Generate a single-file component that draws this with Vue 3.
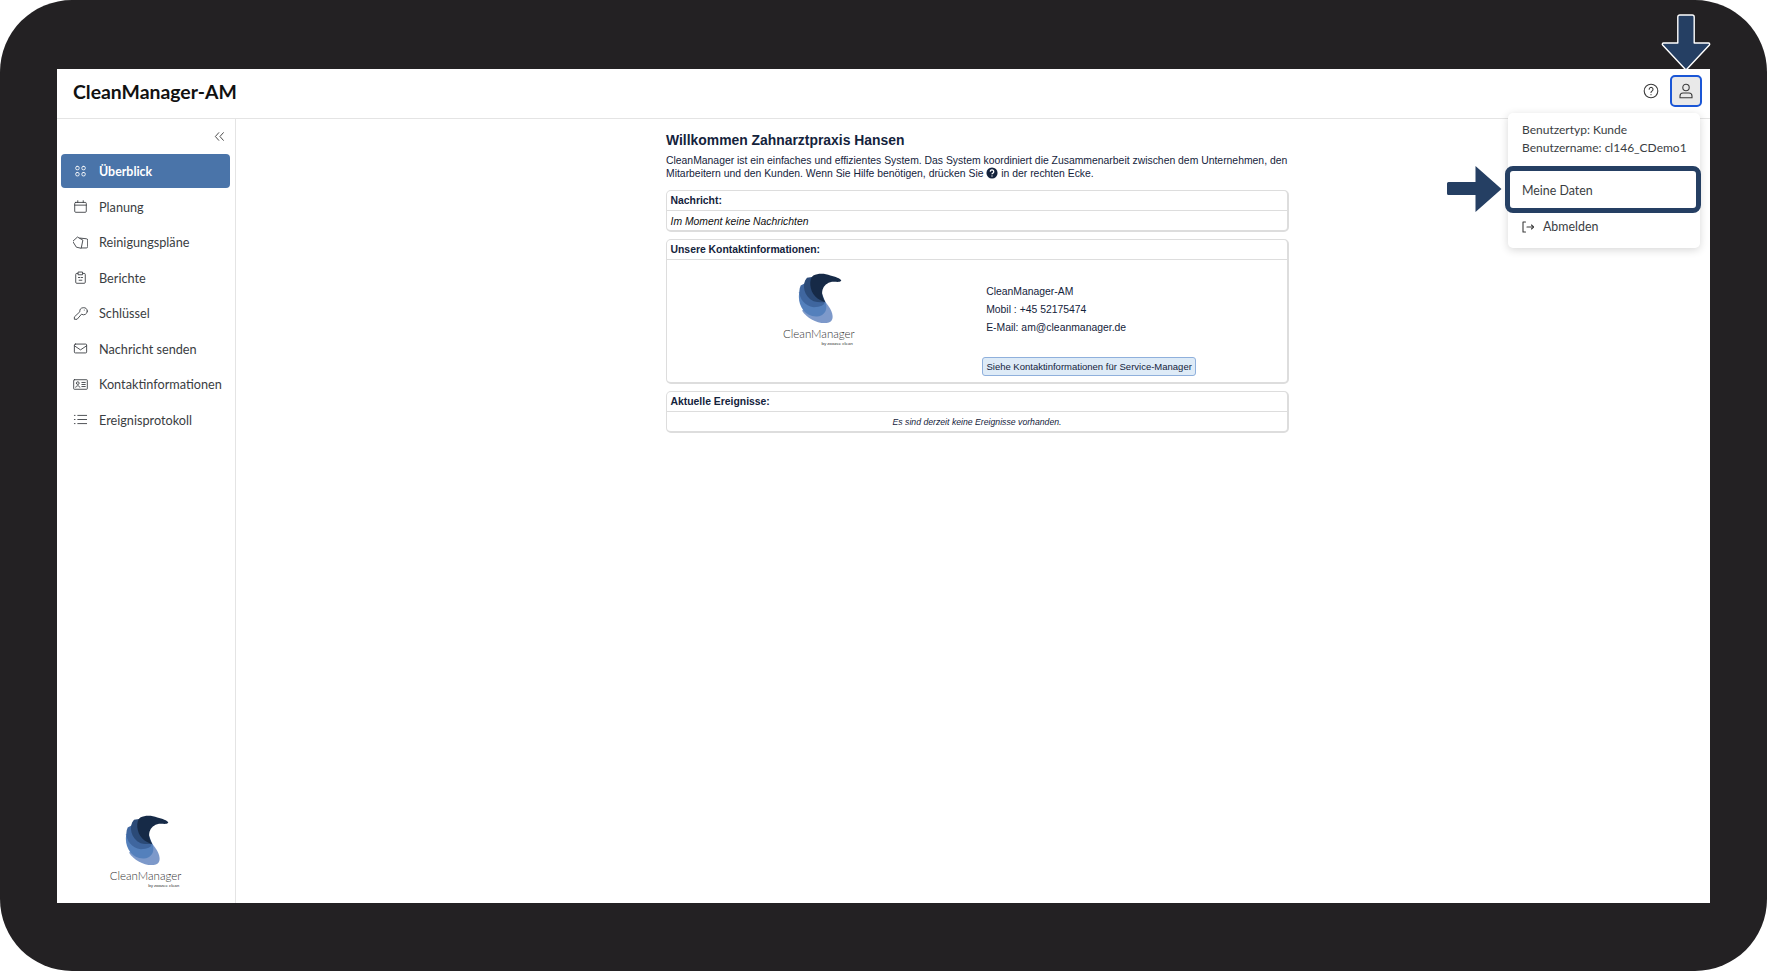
<script setup>
const navItems = [
  { label: 'Überblick', active: true, paths: ['M6 3.500h1a2 2 0 0 1 2 2v1a2 2 0 0 1-2 2H6a2 2 0 0 1-2-2v-1a2 2 0 0 1 2-2z', 'M15 3.500h1a2 2 0 0 1 2 2v1a2 2 0 0 1-2 2h-1a2 2 0 0 1-2-2v-1a2 2 0 0 1 2-2z', 'M6 12.500h1a2 2 0 0 1 2 2v1a2 2 0 0 1-2 2H6a2 2 0 0 1-2-2v-1a2 2 0 0 1 2-2z', 'M15 12.500h1a2 2 0 0 1 2 2v1a2 2 0 0 1-2 2h-1a2 2 0 0 1-2-2v-1a2 2 0 0 1 2-2z'] },
  { label: 'Planung', paths: ['M4 5h14a1.5 1.5 0 0 1 1.5 1.5V18a1.5 1.5 0 0 1-1.5 1.5H4A1.5 1.5 0 0 1 2.500 18V6.500A1.500 1.500 0 0 1 4 5z', 'M2.500 9h17', 'M7 2.500V5', 'M15 2.500V5'] },
  { label: 'Reinigungspläne', paths: ['M10 4.500l9.500 1a2 2 0 0 1 2 2V17a2 2 0 0 1-2 2h-7', 'M0 9l6.500-6 8 4.500-2.500 12-6.500-1.500z'] },
  { label: 'Berichte', paths: ['M7 5H5.500A1.500 1.500 0 0 0 4 6.500V18a1.500 1.500 0 0 0 1.500 1.500h11A1.500 1.500 0 0 0 18 18V6.500A1.500 1.500 0 0 0 16.500 5H15', 'M8 3h6v4H8z', 'M8 11h2', 'M12 11h2', 'M9 15h4'] },
  { label: 'Schlüssel', paths: ['M21 7.500a5.500 5.500 0 0 1-8.500 4.500l-6.500 7.500H2v-3.500l8-7.500A5.500 5.500 0 0 1 21 7.500z', 'M16.500 6h.01'] },
  { label: 'Nachricht senden', paths: ['M3.500 4.500h15A1.500 1.500 0 0 1 20 6v10a1.500 1.500 0 0 1-1.500 1.500h-15A1.500 1.500 0 0 1 2 16V6a1.500 1.500 0 0 1 1.500-1.500z', 'M2 7l9 6 9-6'] },
  { label: 'Kontaktinformationen', paths: ['M2 4h18a1 1 0 0 1 1 1v12a1 1 0 0 1-1 1H2a1 1 0 0 1-1-1V5a1 1 0 0 1 1-1z', 'M5 9a2 2 0 1 1 4 0 2 2 0 1 1-4 0', 'M4 15c.500-3 5.500-3 6 0', 'M13 8h5', 'M13 11h5', 'M13 14h5'] },
  { label: 'Ereignisprotokoll', paths: ['M7 5h13', 'M7 11h13', 'M7 17h13', 'M2 5h1', 'M2 11h1', 'M2 17h1'] }
]

const logoLayers = [
  { fill: '#7d99ca', d: 'M10 110C25 135 60 152 88 147C108 143 108 115 78 82Z' },
  { fill: '#5480bc', d: 'M2 55C-5 90 15 130 55 128C80 125 88 105 80 84L30 30Z' },
  { fill: '#3f669f', d: 'M6 35C-6 60 10 95 45 100C65 100 78 95 78 84L35 20Z' },
  { fill: '#2b4a77', d: 'M25 12C8 30 15 70 45 82C60 86 72 84 80 85C70 60 60 30 50 8Z' },
  { fill: '#162a47', d: 'M44 5C30 15 32 50 50 68C58 76 70 83 80 85C62 60 70 30 100 24C110 22 122 28 128 20C125 14 110 8 95 5C78 -2 58 -2 44 5Z' }
]
</script>

<template>
  <div class="page">
    <div class="frame">
      <header class="topbar">
        <h1 class="brand">CleanManager-AM</h1>
        <div class="top-actions">
          <svg class="help-icon" viewBox="0 0 16 16" fill="none" stroke="#3b3b3b" stroke-width="1.100" stroke-linecap="round">
            <circle cx="8" cy="8" r="6.800" />
            <path d="M6.200 6.300a1.900 1.900 0 1 1 2.900 1.600c-.7.400-1.100.8-1.100 1.600" />
            <path d="M8 11.600v.1" />
          </svg>
          <button class="user-btn">
            <svg viewBox="0 0 16 16" fill="none" stroke="#3b3b3b" stroke-width="1.100">
              <circle cx="8" cy="4.500" r="3.200" />
              <path d="M5 10h6a3 3 0 0 1 3 3v1.800H2V13a3 3 0 0 1 3-3z" />
            </svg>
          </button>
        </div>
      </header>

      <div class="body">
        <aside class="sidebar">
          <div class="collapse">
            <svg viewBox="0 0 12 12" fill="none" stroke="#3b3b3b" stroke-width="1">
              <path d="M5.500 1.500L1.500 6l4 4.500" />
              <path d="M10.500 1.500L6.500 6l4 4.500" />
            </svg>
          </div>
          <nav class="nav">
            <a v-for="item in navItems" :key="item.label" class="nav-item" :class="{ active: item.active }">
              <svg class="nav-icon" viewBox="0 0 22 22" fill="none" stroke="currentColor" stroke-width="1.300" stroke-linejoin="round" stroke-linecap="round">
                <path v-for="d in item.paths" :key="d" :d="d" />
              </svg>
              <span>{{ item.label }}</span>
            </a>
          </nav>
          <div class="side-logo">
            <svg class="wave" viewBox="-2 -2 132 152">
              <path v-for="l in logoLayers" :key="l.fill" :fill="l.fill" :d="l.d" />
            </svg>
            <div class="logo-name">CleanManager</div>
            <div class="logo-by">by zoozee clean</div>
          </div>
        </aside>

        <main class="main">
          <div class="content">
            <h2 class="welcome">Willkommen Zahnarztpraxis Hansen</h2>
            <p class="intro">
              CleanManager ist ein einfaches und effizientes System. Das System koordiniert die Zusammenarbeit zwischen dem Unternehmen, den Mitarbeitern und den Kunden. Wenn Sie Hilfe benötigen, drücken Sie
              <svg class="inline-help" viewBox="0 0 14 14">
                <circle cx="7" cy="7" r="6.500" fill="#14233c" />
                <path d="M5 5.400a2 2 0 1 1 3.100 1.700c-.7.400-1.100.8-1.100 1.500" fill="none" stroke="#fff" stroke-width="1.500" />
                <path d="M7 9.800v1.400" fill="none" stroke="#fff" stroke-width="1.500" />
              </svg>
              in der rechten Ecke.
            </p>

            <section class="panel">
              <div class="panel-head">Nachricht:</div>
              <div class="panel-row msg">Im Moment keine Nachrichten</div>
            </section>

            <section class="panel">
              <div class="panel-head">Unsere Kontaktinformationen:</div>
              <div class="contact">
                <div class="contact-logo">
                  <svg class="wave" viewBox="-2 -2 132 152">
                    <path v-for="l in logoLayers" :key="l.fill" :fill="l.fill" :d="l.d" />
                  </svg>
                  <div class="logo-name">CleanManager</div>
                  <div class="logo-by">by zoozee clean</div>
                </div>
                <div class="contact-info">
                  <div>CleanManager-AM</div>
                  <div>Mobil : +45 52175474</div>
                  <div>E-Mail: am@cleanmanager.de</div>
                  <button class="service-btn">Siehe Kontaktinformationen für Service-Manager</button>
                </div>
              </div>
            </section>

            <section class="panel">
              <div class="panel-head">Aktuelle Ereignisse:</div>
              <div class="panel-row events">Es sind derzeit keine Ereignisse vorhanden.</div>
            </section>
          </div>
        </main>
      </div>

      <div class="menu">
        <div class="menu-info">
          <div>Benutzertyp: Kunde</div>
          <div>Benutzername: cl146_CDemo1</div>
        </div>
        <div class="menu-item mine">Meine Daten</div>
        <div class="menu-item logout">
          <svg viewBox="0 0 14 14" fill="none" stroke="#3b3b3b" stroke-width="1.100" stroke-linecap="round" stroke-linejoin="round">
            <path d="M4.500 2H2v10h2.500" />
            <path d="M6 7h6.500" />
            <path d="M10.500 5l2 2-2 2" />
          </svg>
          <span>Abmelden</span>
        </div>
      </div>
    </div>

    <svg class="arrow-down" viewBox="0 0 52 58">
      <path d="M17.800 3a2 2 0 0 1 2-2h12.400a2 2 0 0 1 2 2v26h14.300a1.200 1.200 0 0 1 .9 2L26.500 55.500a.7.7 0 0 1-1 0L2.600 31a1.200 1.200 0 0 1 .9-2h14.300z" fill="#253f63" stroke="#fff" stroke-width="1.400" stroke-linejoin="round" />
    </svg>
    <svg class="arrow-right" viewBox="0 0 55 48">
      <path d="M1.500 17h27V1l26 23-26 23V30h-27a1.500 1.500 0 0 1-1.500-1.500v-10A1.500 1.500 0 0 1 1.500 17z" fill="#253f63" />
    </svg>
  </div>
</template>

<style>
body {
  background: #fff;
}
</style>

<style scoped>
.page {
  position: relative;
  width: 1767px;
  height: 971px;
  box-sizing: border-box;
  padding: 69px 57px 68px;
  background: #232123;
  border-radius: 72px;
  overflow: hidden;
  font-family: "Lato", "Noto Sans", sans-serif;
}
.frame {
  position: relative;
  height: 100%;
  background: #fff;
  display: flex;
  flex-direction: column;
}
.topbar {
  height: 50px;
  flex: none;
  box-sizing: border-box;
  display: flex;
  align-items: center;
  justify-content: space-between;
  padding: 0 8px 0 16px;
  border-bottom: 1px solid #e4e4e4;
}
.brand {
  margin: 0 0 5px;
  font-size: 19.400px;
  font-weight: 700;
  color: #111;
}
.top-actions {
  display: flex;
  align-items: center;
  gap: 11px;
  margin-bottom: 6px;
}
.help-icon {
  width: 16px;
  height: 16px;
}
.user-btn {
  width: 32px;
  height: 32px;
  padding: 0;
  display: flex;
  align-items: center;
  justify-content: center;
  background: #e9e9e9;
  border: 2px solid #1a56d6;
  border-radius: 5px;
}
.user-btn svg {
  width: 16px;
  height: 16px;
}
.body {
  flex: 1;
  display: flex;
  min-height: 0;
}
.sidebar {
  width: 179px;
  flex: none;
  box-sizing: border-box;
  border-right: 1px solid #e4e4e4;
  display: flex;
  flex-direction: column;
  padding: 0 5px 15px 4px;
}
.collapse {
  display: flex;
  justify-content: flex-end;
  padding: 12px 5px 0 0;
  height: 35px;
  box-sizing: border-box;
}
.collapse svg {
  width: 11px;
  height: 11px;
}
.nav {
  display: flex;
  flex-direction: column;
  gap: 1.500px;
}
.nav-item {
  height: 34px;
  display: flex;
  align-items: center;
  gap: 11.500px;
  padding-left: 12px;
  border-radius: 4px;
  font-size: 12.700px;
  color: #3a3d42;
}
.nav-item.active {
  background: #4a74a9;
  color: #fff;
  font-weight: 700;
  font-size: 12.400px;
}
.nav-icon {
  width: 15px;
  height: 15px;
  flex: none;
  margin-left: -.5px;
}
.side-logo,
.contact-logo {
  display: flex;
  flex-direction: column;
  align-items: center;
}
.side-logo {
  margin: auto auto 0;
}
.side-logo .wave {
  width: 44px;
  height: 51px;
  margin: 0 0 0 2px;
}
.wave {
  display: block;
}
.logo-name {
  font-family: "Lato", "Noto Sans", sans-serif;
  font-size: 11.500px;
  font-weight: 300;
  color: #333;
  line-height: 14px;
  margin-top: 3px;
}
.logo-by {
  font-family: "Lato", "Noto Sans", sans-serif;
  font-size: 4.500px;
  color: #333;
  line-height: 5px;
  align-self: flex-end;
  margin-right: 2px;
}
.main {
  flex: 1;
  min-width: 0;
}
.content {
  width: 623px;
  margin-left: 430px;
  font-family: "Liberation Sans", Arial, sans-serif;
  color: #14233c;
}
.welcome {
  margin: 12px 0 5px;
  font-size: 13.900px;
  line-height: 18px;
  font-weight: 700;
}
.intro {
  margin: 0 0 10px;
  font-size: 10.400px;
  line-height: 13px;
}
.inline-help {
  width: 12px;
  height: 12px;
  vertical-align: -2px;
}
.panel {
  border: 1px solid #ddd;
  border-bottom-width: 2px;
  border-right-width: 2px;
  border-radius: 5px;
  margin-bottom: 7px;
  box-sizing: border-box;
}
.panel-head {
  height: 20px;
  line-height: 20px;
  padding-left: 3.500px;
  font-size: 10.400px;
  font-weight: 700;
  border-bottom: 1px solid #ddd;
  box-sizing: border-box;
}
.panel-row {
  height: 19px;
  line-height: 21px;
  padding-left: 3.500px;
}
.msg {
  font-size: 10.400px;
  font-style: italic;
  color: #111;
}
.events {
  font-size: 8.700px;
  font-style: italic;
  text-align: center;
  padding-left: 0;
}
.contact {
  height: 122px;
  display: flex;
}
.contact-logo {
  flex: none;
  margin: 0 131.500px 0 116px;
  padding-top: 13px;
  box-sizing: border-box;
  align-self: flex-start;
}
.contact-logo .wave {
  width: 44px;
  height: 51px;
  margin-left: 2px;
}
.contact-info {
  font-size: 10.400px;
  line-height: 18px;
  padding-top: 23px;
  color: #14233c;
}
.service-btn {
  display: block;
  margin: 20px 0 0 -4px;
  width: 214px;
  height: 19px;
  padding: 0;
  font-family: "Liberation Sans", Arial, sans-serif;
  font-size: 9.500px;
  color: #14233c;
  background: #deebf7;
  border: 1px solid #8fb0dc;
  border-radius: 3px;
}
.menu {
  position: absolute;
  left: 1451px;
  top: 44px;
  width: 192px;
  height: 135px;
  box-sizing: border-box;
  background: #fff;
  border-radius: 5px;
  box-shadow: 0 2px 9px rgba(0, 0, 0, 0.16);
  font-size: 12px;
  color: #3a3d42;
}
.menu-info {
  padding: 8px 14px 0;
  line-height: 18px;
  height: 53px;
  box-sizing: border-box;
  white-space: nowrap;
}
.menu-item {
  display: flex;
  align-items: center;
  padding-left: 14px;
  box-sizing: border-box;
  font-size: 12.400px;
}
.mine {
  height: 47px;
  margin: 0 -1px 0 -3px;
  padding: 2px 0 0 12px;
  border: 5px solid #253f63;
  border-radius: 8px;
  background: #fff;
}
.logout {
  height: 35px;
  gap: 8px;
  padding: 0 0 8px 13px;
}
.logout svg {
  width: 14px;
  height: 14px;
}
.arrow-down {
  position: absolute;
  left: 1660px;
  top: 14px;
  width: 52px;
  height: 58px;
}
.arrow-right {
  position: absolute;
  left: 1447px;
  top: 165px;
  width: 55px;
  height: 48px;
}
</style>
